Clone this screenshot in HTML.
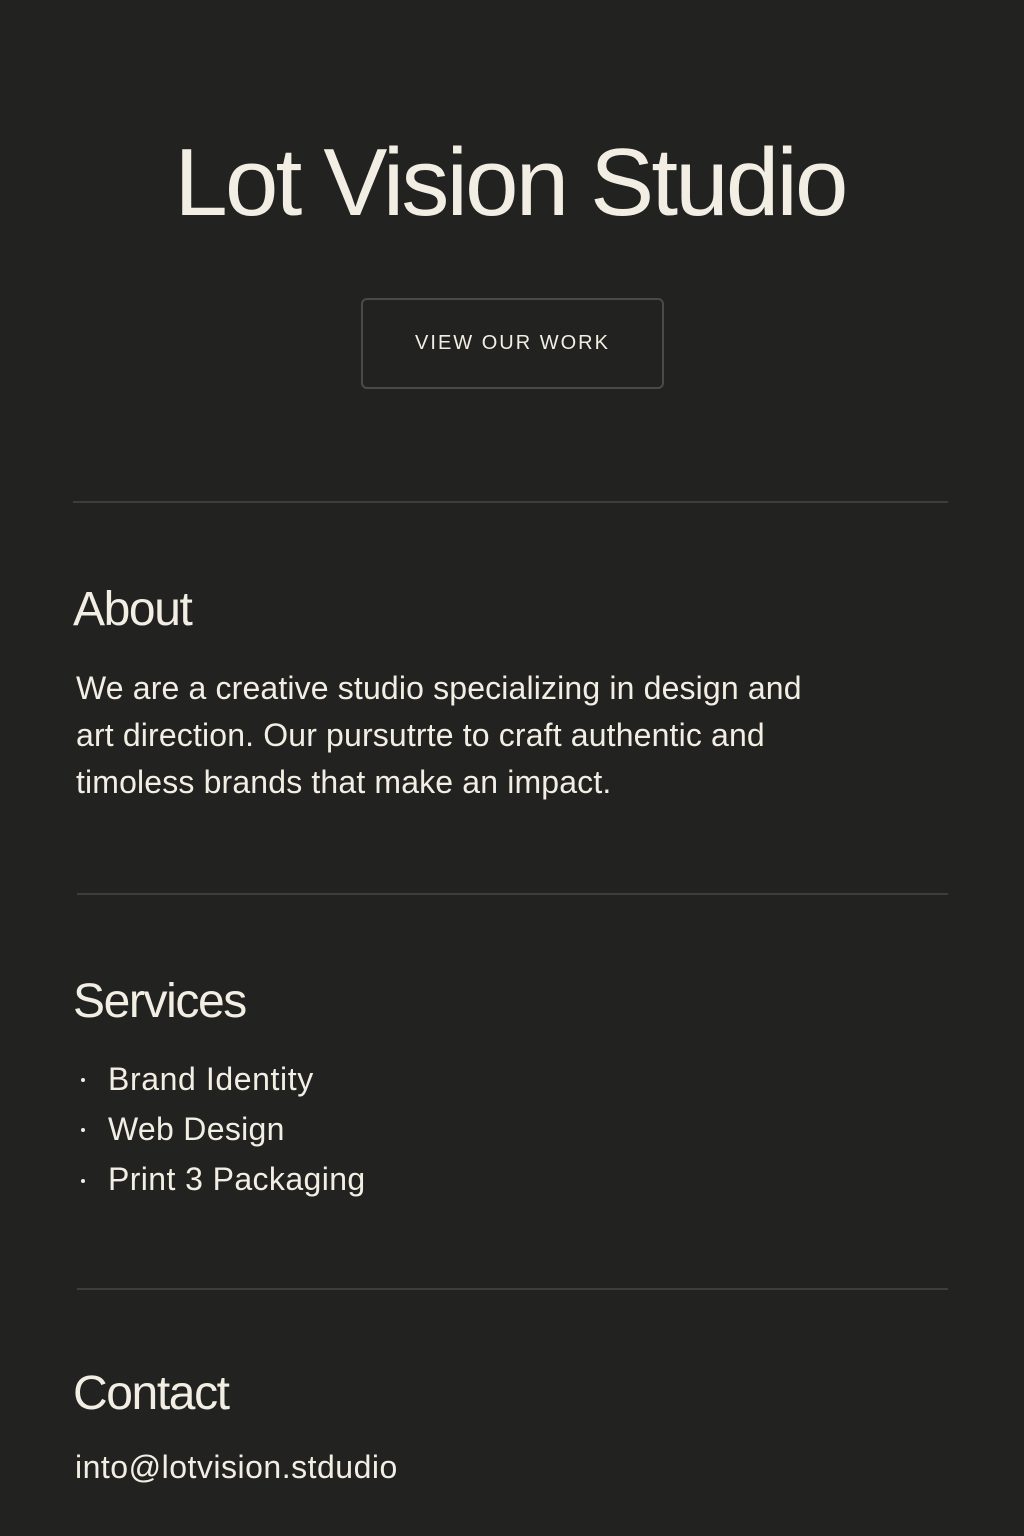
<!DOCTYPE html>
<html><head><meta charset="utf-8"><style>
html,body{margin:0;padding:0;}
body{width:1024px;height:1536px;background:#222221;color:#f2eee3;font-family:"Liberation Sans",sans-serif;position:relative;overflow:hidden;}
.a{position:absolute;white-space:nowrap;}
h1{position:absolute;margin:0;left:0;width:1020px;text-align:center;top:128px;font-weight:400;font-size:96px;letter-spacing:-2.8px;line-height:110px;}
.btn{position:absolute;left:361px;top:298px;width:303px;height:91px;border:2px solid #4a4a48;border-radius:6px;box-sizing:border-box;text-align:center;line-height:87px;font-size:20px;letter-spacing:2px;}
.hr{position:absolute;height:2px;background:#3d3d3b;}
h2{position:absolute;margin:0;font-weight:400;font-size:48px;letter-spacing:-1.4px;line-height:56px;}
.p{font-size:32px;letter-spacing:0.15px;line-height:47px;}
.li{font-size:32px;letter-spacing:0.3px;}
.dot{position:absolute;width:4px;height:4px;border-radius:2px;background:#f2eee3;}
</style></head><body>
<h1>Lot Vision Studio</h1>
<div class="btn">VIEW OUR WORK</div>
<div class="hr" style="left:73px;width:875px;top:501px"></div>
<h2 style="left:73px;top:582px">About</h2>
<div class="a p" style="left:76px;top:665px">We are a creative studio specializing in design and<br>art direction. Our pursutrte to craft authentic and<br>timoless brands that make an impact.</div>
<div class="hr" style="left:77px;width:871px;top:893px"></div>
<h2 style="left:73px;top:974px">Services</h2>
<div class="dot" style="left:81px;top:1078px"></div>
<div class="dot" style="left:81px;top:1128px"></div>
<div class="dot" style="left:81px;top:1179px"></div>
<div class="a li" style="left:108px;top:1061px;letter-spacing:0.6px">Brand Identity</div>
<div class="a li" style="left:108px;top:1111px">Web Design</div>
<div class="a li" style="left:108px;top:1161px;letter-spacing:0.4px">Print 3 Packaging</div>
<div class="hr" style="left:77px;width:871px;top:1288px"></div>
<h2 style="left:73px;top:1366px">Contact</h2>
<div class="a li" style="left:75px;top:1449px;letter-spacing:0.5px">into@lotvision.stdudio</div>
</body></html>
